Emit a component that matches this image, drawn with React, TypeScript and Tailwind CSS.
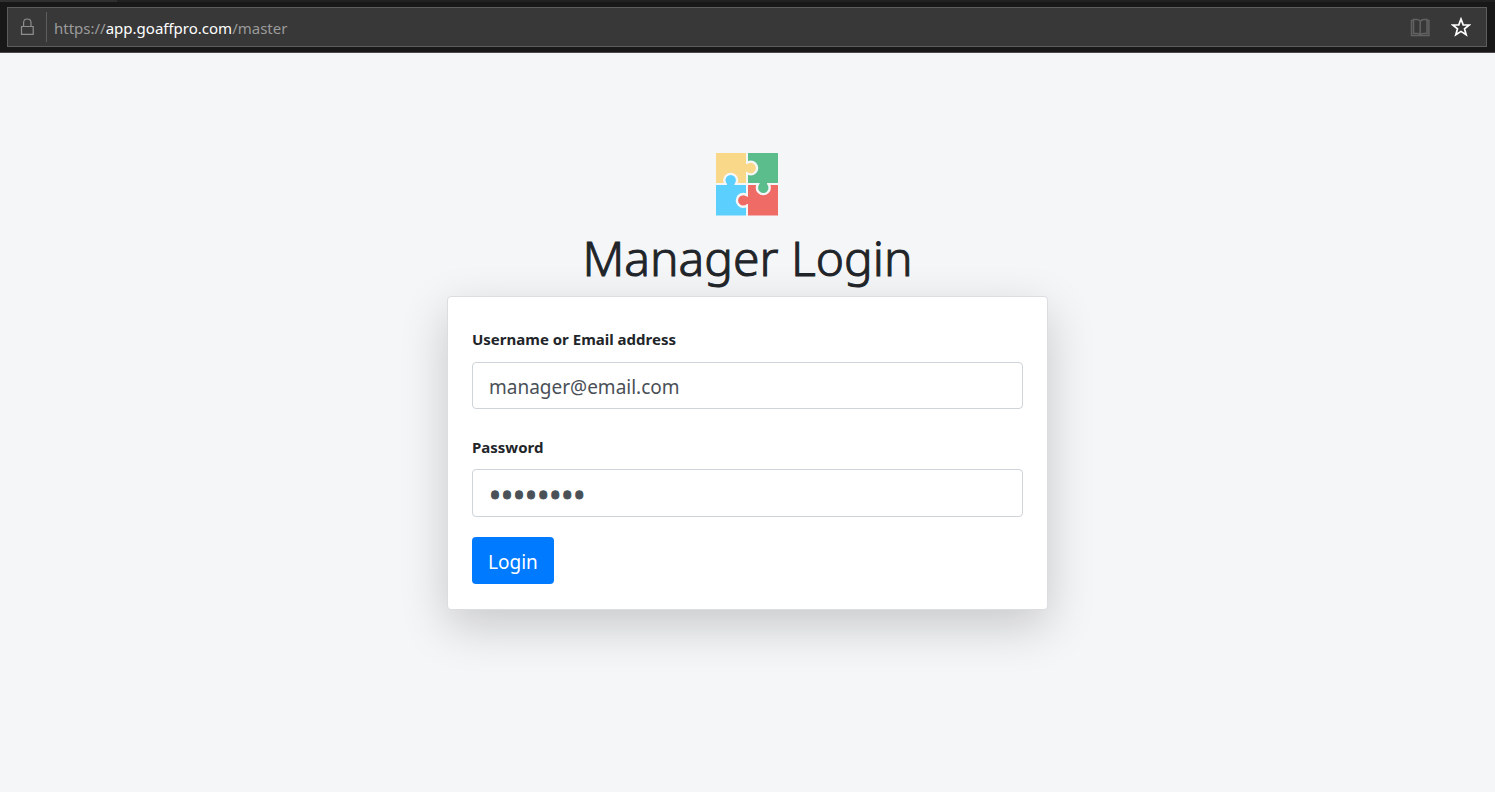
function LockIcon() {
  return (
    <svg className="h-5 w-4" viewBox="0 0 16 20" fill="none" stroke="#8e8e8e" strokeWidth="1.200" aria-hidden="true">
      <path d="M2.500 9.500H14.200V17.300H2.500Z" />
      <path d="M4.600 9.500V5.700Q4.600 2 8.300 2T12 5.700V9.500" />
    </svg>
  );
}

function BookIcon() {
  return (
    <svg className="h-5 w-5" viewBox="0 0 20 20" fill="none" stroke="#626262" strokeWidth="1.500" aria-hidden="true">
      <path d="M3.500 3.500H1.500V18.500H18.900V3.500H17" />
      <path d="M10.200 4.500Q9.500 2.500 7 2.500H3.500V16.500H7.500Q9.500 16.500 10.200 18Q11.500 16.500 13.500 16.500H17V2.500H14Q11.500 2.500 10.200 4.500V18" />
    </svg>
  );
}

function StarIcon() {
  return (
    <svg className="h-5 w-5" viewBox="0 0 20 20" fill="none" stroke="#fff" strokeWidth="1.700" aria-hidden="true">
      <path d="M10 2L12.200 7.800L18.300 8L13.500 11.800L15.200 17.800L10 14.400L4.800 17.800L6.500 11.800L1.700 8L7.800 7.800Z" />
    </svg>
  );
}

function PuzzleLogo() {
  return (
    <svg className="h-[63px] w-[63px]" viewBox="1 1 63 63" role="img" aria-label="GoAffPro">
      <path fill="#f9d88a" d="M1 1H31V31H1Z" />
      <path fill="#5bbd8b" d="M33 1H63V31H33Z" />
      <path fill="#5bd0ff" d="M1 33H31V63.500H1Z" />
      <path fill="#ef6c66" d="M33 33H63V63.500H33Z" />
      <g stroke="#f5f6f8" strokeWidth="2.400">
        <circle cx="35.700" cy="16" r="6.400" fill="#f9d88a" />
        <circle cx="48.300" cy="35.700" r="6.400" fill="#5bbd8b" />
        <circle cx="15.700" cy="28.300" r="6.400" fill="#5bd0ff" />
        <circle cx="28.300" cy="48.400" r="6.400" fill="#ef6c66" />
      </g>
      <path fill="#f9d88a" d="M26 8H31V12.300H33V19.700H31V24H26Z" />
      <path fill="#5bbd8b" d="M40 26H56V31H52V33H44.600V31H40Z" />
      <path fill="#5bd0ff" d="M8 37V33H12V31H19.400V33H24V37Z" />
      <path fill="#ef6c66" d="M38 40V56H33V52.100H31V44.700H33V40Z" />
    </svg>
  );
}

export default function App() {
  return (
    <div className="flex min-h-screen flex-col bg-[#f5f6f8] font-['Noto_Sans','Open_Sans',sans-serif] text-[#212529]">
      <header className="border-b border-[#4e4a4a] bg-[#181818]">
        <div className="flex h-[2px] bg-[#212121]">
          <span className="w-[117px] bg-[#303030]" />
        </div>
        <div className="pt-[5px] pr-2 pb-[5px] pl-[7px]">
          <div className="flex h-10 items-center border border-[#5d5d5d] bg-[#383838]">
            <span className="ml-[11px]"><LockIcon /></span>
            <span className="ml-[11px] h-[30px] w-px bg-[#5d5d5d]" />
            <a href="https://app.goaffpro.com/master" className="ml-[7px] pt-[2px] text-[15px] leading-5 text-[#9b9b9b]">
              https://<span className="text-white">app.goaffpro.com</span>/master
            </a>
            <div className="mr-[15px] ml-auto flex items-center gap-[21px]">
              <button type="button" aria-label="Reading view"><BookIcon /></button>
              <button type="button" aria-label="Add to favorites"><StarIcon /></button>
            </div>
          </div>
        </div>
      </header>
      <main className="flex flex-1 flex-col items-center pt-[100px]">
        <PuzzleLogo />
        <h1 className="pt-3 pb-2 text-[48px] leading-[60px] font-light [-webkit-text-stroke:1px_#212529]">Manager Login</h1>
        <form
          className="w-full max-w-[601px] rounded border border-[#dcdde0] bg-white px-6 pt-[30px] pb-[25px] shadow-[0_16px_48px_rgba(0,0,0,0.19)]"
          onSubmit={(event) => event.preventDefault()}
        >
          <label htmlFor="username" className="block text-[15px] leading-6 font-bold">Username or Email address</label>
          <input
            id="username"
            type="text"
            defaultValue="manager@email.com"
            className="mt-[11px] block h-[47px] w-full rounded border border-[#ced4da] bg-white px-4 pt-[2px] text-[19px] text-[#495057]"
          />
          <label htmlFor="password" className="mt-[26px] block text-[15px] leading-6 font-bold">Password</label>
          <input
            id="password"
            type="password"
            defaultValue="password"
            className="mt-[10px] block h-12 w-full rounded border border-[#ced4da] bg-white px-4 pt-1 text-[32px] text-[#495057] [-webkit-text-stroke:1px_#495057]"
          />
          <button type="submit" className="mt-5 block h-[47px] rounded bg-[#007bff] px-4 pt-1 text-[19px] text-white">Login</button>
        </form>
      </main>
    </div>
  );
}
